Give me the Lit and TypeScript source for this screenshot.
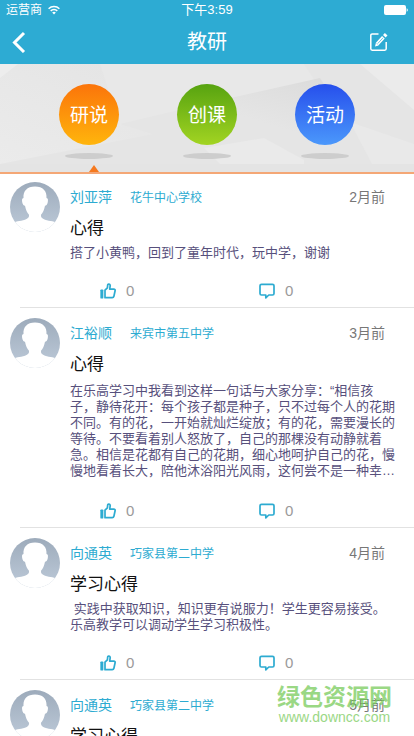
import { LitElement, html, css, svg } from "lit";
import { customElement, property, state } from "lit/decorators.js";
import { classMap } from "lit/directives/class-map.js";

interface Post {
  name: string;
  school: string;
  time: string;
  title: string;
  body: string;
  long?: boolean;
}

const POSTS: Post[] = [
  {
    name: "刘亚萍",
    school: "花牛中心学校",
    time: "2月前",
    title: "心得",
    body: "搭了小黄鸭，回到了童年时代，玩中学，谢谢",
  },
  {
    name: "江裕顺",
    school: "来宾市第五中学",
    time: "3月前",
    title: "心得",
    body: "在乐高学习中我看到这样一句话与大家分享：“相信孩子，静待花开：每个孩子都是种子，只不过每个人的花期不同。有的花，一开始就灿烂绽放；有的花，需要漫长的等待。不要看着别人怒放了，自己的那棵没有动静就着急。相信是花都有自己的花期，细心地呵护自己的花，慢慢地看着长大，陪他沐浴阳光风雨，这何尝不是一种幸…",
    long: true,
  },
  {
    name: "向通英",
    school: "巧家县第二中学",
    time: "4月前",
    title: "学习心得",
    body: " 实践中获取知识，知识更有说服力！学生更容易接受。\n乐高教学可以调动学生学习积极性。",
  },
  {
    name: "向通英",
    school: "巧家县第二中学",
    time: "5月前",
    title: "学习心得",
    body: "乐高教学可以调动学生学习积极性。",
  },
];

const TABS = [
  { label: "研说", tone: "orange" },
  { label: "创课", tone: "green" },
  { label: "活动", tone: "blue" },
];

@customElement("post-card")
export class PostCard extends LitElement {
  @property({ attribute: false }) post!: Post;

  static styles = css`
    :host {
      display: block;
    }
    .card {
      display: grid;
      grid-template-columns: 50px 1fr;
      column-gap: 10px;
      padding: 10px 16px 0 10px;
    }
    .avatar {
      display: block;
      width: 50px;
      height: 50px;
    }
    .meta {
      display: flex;
      align-items: center;
      height: 28px;
      gap: 18px;
      color: #2dabd1;
      font-size: 14px;
      margin-right: 13px;
    }
    .school {
      flex: 1;
      font-size: 12px;
    }
    .time {
      color: #777;
    }
    .title {
      margin: 7px 0 4px;
      font-size: 17px;
      line-height: 24px;
      font-weight: 400;
      color: #111;
    }
    .body {
      margin: 0;
      font-size: 13px;
      line-height: 16px;
      color: #57507c;
      white-space: pre-wrap;
    }
    .long {
      padding: 2px 0;
    }
    .actions {
      display: grid;
      grid-template-columns: 1fr 1fr;
      column-gap: 4px;
      margin: 20px 0 6px 100px;
    }
    .action {
      display: flex;
      align-items: center;
      justify-self: start;
      gap: 10px;
      height: 20px;
      padding: 0;
      border: 0;
      background: none;
      font: inherit;
      font-size: 15px;
      line-height: 18px;
      color: #9a9a9a;
    }
    .icon {
      width: 16px;
      height: 16px;
      fill: none;
      stroke: #2dabd1;
      stroke-width: 1.7;
      stroke-linejoin: round;
      stroke-linecap: round;
    }
    .rule {
      height: 1px;
      margin-left: 20px;
      background: #e2e2e2;
    }
  `;

  render() {
    const p = this.post;
    return html`
      <article>
        <div class="card">
          <svg class="avatar" viewBox="0 0 50 50" aria-hidden="true">
            <defs>
              <linearGradient id="bg" x1="0" y1="0" x2="0" y2="1">
                <stop offset="0" stop-color="#9dabbb" />
                <stop offset="0.8" stop-color="#b7c4d3" />
              </linearGradient>
              <clipPath id="round"><circle cx="25" cy="25" r="25" /></clipPath>
            </defs>
            <g clip-path="url(#round)">
              <rect width="50" height="50" fill="url(#bg)" />
              <path
                fill="#fff"
                d="M25 4.500C17 4.500 13 9 13.500 16c-1.800.2-1.600 2.500-1.200 4.500.4 2 1.200 3.200 2.700 3.300.8 4 2 7 4 9 .4 2.500-1 3.800-4 5C10 39.500 5 39 1 42v8h48v-8c-4-3-9-2.500-14-4.200-3-1.200-4.400-2.500-4-5 2-2 3.200-5 4-9 1.500-.1 2.300-1.300 2.700-3.300.4-2 .6-4.300-1.200-4.500C37 9 33 4.500 25 4.500z"
              />
            </g>
          </svg>
          <div>
            <div class="meta">
              <span>${p.name}</span>
              <span class="school">${p.school}</span>
              <time class="time">${p.time}</time>
            </div>
            <h2 class="title">${p.title}</h2>
            <p class=${classMap({ body: true, long: !!p.long })}>${p.body}</p>
          </div>
        </div>
        <div class="actions">
          <button class="action" aria-label="点赞">
            <svg class="icon" viewBox="0 0 16 16">
              <path d="M1.200 7.300h1.300v7.400H1.200z" />
              <path d="M5 7.200 7.400 4.800 7.700 1.900c.2-1.200 2.500-1 2.500.7L9.700 6.200h4.100c1 0 1.500.6 1.300 1.500l-1.200 5.600c-.2.9-.8 1.400-1.700 1.400H5z" />
            </svg>
            <span>0</span>
          </button>
          <button class="action" aria-label="评论">
            <svg class="icon" viewBox="0 0 16 16">
              <path d="M2.500 1.300h11a1.500 1.500 0 0 1 1.500 1.500v7.700a1.500 1.500 0 0 1-1.500 1.500H9.800l-3 2.800V12H2.500A1.500 1.500 0 0 1 1 10.500V2.800a1.500 1.500 0 0 1 1.500-1.500z" />
            </svg>
            <span>0</span>
          </button>
        </div>
        <div class="rule"></div>
      </article>
    `;
  }
}

@customElement("app-root")
export class AppRoot extends LitElement {
  @state() private active = 0;

  static styles = css`
    :host {
      display: flex;
      flex-direction: column;
      position: relative;
      height: 100vh;
      overflow: hidden;
      background: #fff;
      font-family: "Liberation Sans", "Noto Sans CJK SC", sans-serif;
    }
    .top {
      background: #2dabd3;
      color: #fff;
    }
    .status {
      display: grid;
      grid-template-columns: 1fr auto 1fr;
      align-items: center;
      height: 20px;
      padding: 0 6px;
      font-size: 12px;
      line-height: 20px;
    }
    .carrier {
      display: flex;
      align-items: center;
      gap: 6px;
    }
    .wifi {
      width: 12px;
      height: 10px;
    }
    .clock {
      font-size: 13px;
    }
    .battery {
      justify-self: end;
      width: 24px;
      height: 10px;
    }
    .nav {
      display: grid;
      grid-template-columns: 1fr auto 1fr;
      align-items: center;
      height: 44px;
      padding: 0 10px;
    }
    .heading {
      margin: 0;
      font-size: 20px;
      line-height: 44px;
      font-weight: 400;
    }
    .tool {
      display: flex;
      padding: 0;
      border: 0;
      background: none;
      color: inherit;
    }
    .edit {
      justify-self: end;
      margin-right: 15px;
    }
    .tool svg {
      width: 20px;
      height: 22px;
      fill: none;
      stroke: currentColor;
    }
    .banner {
      position: relative;
      height: 108px;
      border-bottom: 2px solid #f4a776;
      background: #e5e5e5;
    }
    .scene {
      position: absolute;
      inset: 0;
      width: 100%;
      height: 100%;
    }
    .tabs {
      position: relative;
      display: grid;
      grid-template-columns: repeat(3, 1fr);
      height: 108px;
      padding: 0 30px;
    }
    .slot {
      position: relative;
      display: flex;
      flex-direction: column;
      align-items: center;
      gap: 8px;
      padding-top: 20px;
    }
    .tab {
      width: 60px;
      height: 61px;
      padding: 0 0 2px;
      border: 0;
      border-radius: 50%;
      color: #fff;
      font: inherit;
      font-size: 19px;
    }
    .orange {
      background: linear-gradient(#fb740a, #ffb50c);
    }
    .green {
      background: linear-gradient(#57a310, #a2d422);
    }
    .blue {
      background: linear-gradient(#264fec, #4b98fb);
    }
    .shade {
      width: 48px;
      height: 6px;
      border-radius: 50%;
      background: #cdcdcd;
    }
    .pointer {
      position: absolute;
      bottom: 0;
      left: 50%;
      border: 5px solid transparent;
      border-top: 0;
      border-bottom: 7px solid #f5791f;
    }
    .list {
      flex: 1;
      min-height: 0;
      margin: 0;
      padding: 0;
      list-style: none;
      overflow-y: auto;
      scrollbar-width: none;
    }
    .item:first-child {
      margin-top: -2px;
    }
    .mark {
      position: absolute;
      right: 22px;
      bottom: 10px;
      text-align: center;
      color: #79cb5c;
      opacity: 0.75;
      pointer-events: none;
    }
    .brand {
      font-size: 23px;
      line-height: 22px;
      font-weight: 700;
    }
    .site {
      font-size: 14px;
      line-height: 18px;
    }
  `;

  private scenery() {
    return svg`
      <defs>
        <linearGradient id="left" x1="0" y1="1" x2="1" y2="0">
          <stop offset="0" stop-color="#ebebeb" />
          <stop offset="1" stop-color="#e3e3e3" />
        </linearGradient>
        <linearGradient id="fold" x1="1" y1="0" x2="0" y2="1">
          <stop offset="0" stop-color="#dadada" />
          <stop offset="0.5" stop-color="#e5e5e5" />
        </linearGradient>
      </defs>
      <rect width="414" height="108" fill="#e5e5e5" />
      <path d="M0 0H170L204 60 0 100z" fill="url(#left)" />
      <path d="M0 0H18L0 14z" fill="#ededed" />
      <path d="M100 0H304L320 24 204 44 120 62z" fill="#e8e8e8" />
      <path d="M204 40 320 14 350 60 264 76 204 86 120 60z" fill="url(#fold)" />
      <path d="M204 84 264 74 304 96V100H220z" fill="#eaeaea" />
      <path d="M304 0H414V46L360 0z" fill="#ebebeb" />
      <path d="M350 58 372 100H414V80z" fill="#e9e9e9" />
      <rect y="100" width="414" height="8" fill="#e4e4e4" />
    `;
  }

  render() {
    return html`
      <header class="top">
        <div class="status">
          <span class="carrier">
            运营商
            <svg class="wifi" viewBox="0 0 12 10" fill="none" stroke="#fff" stroke-width="1.500">
              <path d="M.6 3.700a7.800 7.800 0 0 1 10.800 0M2.700 5.900a4.800 4.800 0 0 1 6.600 0" />
              <path d="M6 9.500 4.200 7.600a2.600 2.600 0 0 1 3.600 0z" fill="#fff" stroke="none" />
            </svg>
          </span>
          <span class="clock">下午3:59</span>
          <svg class="battery" viewBox="0 0 24 10" fill="#fff">
            <rect width="22" height="10" rx="2" />
            <path d="M22.600 3.200c1.600.6 1.600 3 0 3.600z" />
          </svg>
        </div>
        <div class="nav">
          <button class="tool" aria-label="返回">
            <svg viewBox="0 0 20 22" stroke-width="3"><path d="M14 2 4.500 11.500 14 21" /></svg>
          </button>
          <h1 class="heading">教研</h1>
          <button class="tool edit" aria-label="编辑">
            <svg viewBox="0 0 20 22" stroke-width="1.500">
              <path d="M9.500 3H3.200q-1.400 0-1.400 1.400V17.800q0 1.400 1.400 1.400H15.800q1.400 0 1.400-1.400V11" />
              <path d="M8.200 13 14.400 6.200" stroke-width="3.600" />
              <path d="M15.300 5.200 17.200 3.200" stroke-width="3.600" />
              <path d="M6 15.500 6.900 11.700 9.700 14.400z" fill="currentColor" stroke="none" />
              <path d="M8.700 12.600 14 6.800" stroke="#2dabd3" stroke-width="0.700" />
            </svg>
          </button>
        </div>
      </header>
      <nav class="banner">
        <svg class="scene" viewBox="0 0 414 108" preserveAspectRatio="none" aria-hidden="true">
          ${this.scenery()}
        </svg>
        <div class="tabs">
          ${TABS.map(
            (t, i) => html`
              <div class="slot">
                <button
                  class=${classMap({ tab: true, [t.tone]: true })}
                  @click=${() => (this.active = i)}
                >
                  ${t.label}
                </button>
                <span class="shade"></span>
                ${i === this.active ? html`<span class="pointer"></span>` : ""}
              </div>
            `
          )}
        </div>
      </nav>
      <ul class="list">
        ${POSTS.map((p) => html`<li class="item"><post-card .post=${p}></post-card></li>`)}
      </ul>
      <div class="mark">
        <div class="brand">绿色资源网</div>
        <div class="site">www.downcc.com</div>
      </div>
    `;
  }
}
